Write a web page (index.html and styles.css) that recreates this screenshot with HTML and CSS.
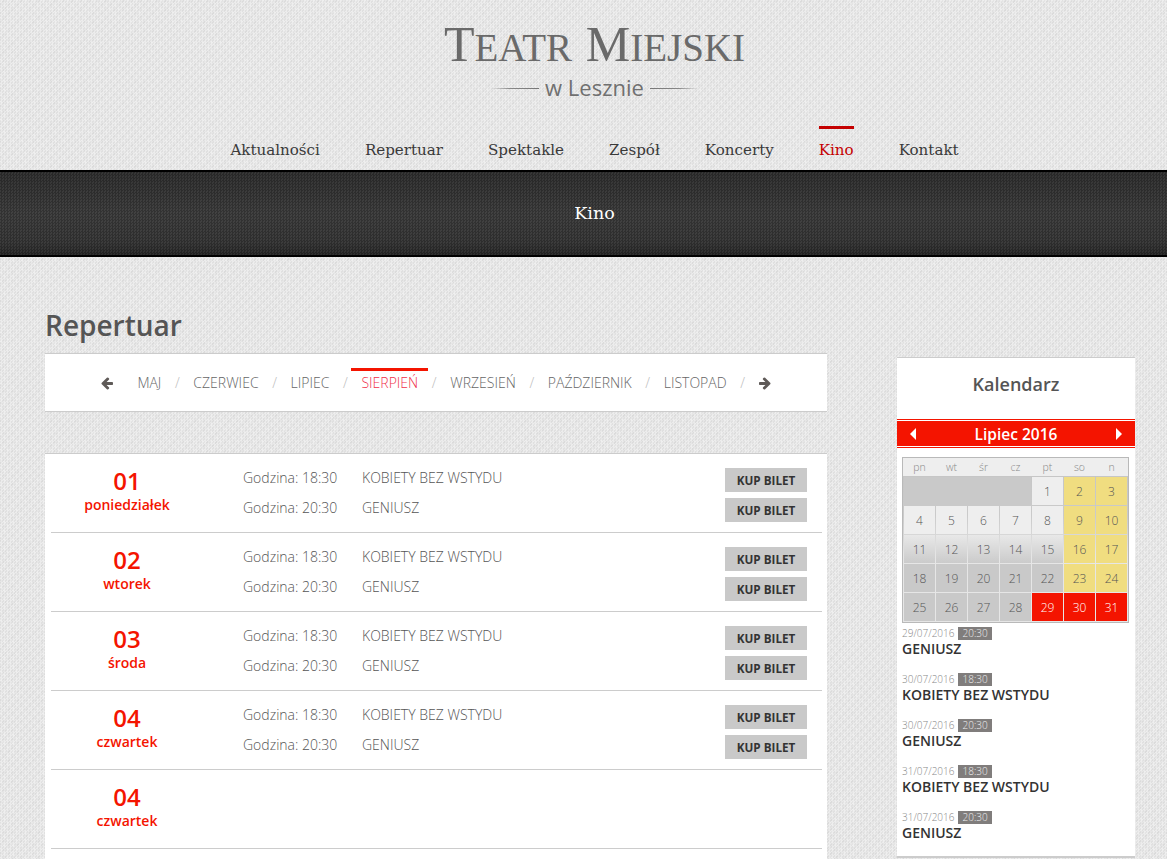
FILE: index.html
```html
<!DOCTYPE html>
<html lang="pl">
<head>
<meta charset="utf-8">
<title>Teatr Miejski w Lesznie</title>
<link rel="stylesheet" href="styles.css">
</head>
<body>
<header class="site-header">
  <div class="logo">
    <div class="logo-title"><span class="cap">T</span>EATR <span class="cap">M</span>IEJSKI</div>
    <div class="logo-sub">w Lesznie</div>
  </div>
  <nav class="main-nav">
    <a href="#">Aktualności</a>
    <a href="#">Repertuar</a>
    <a href="#">Spektakle</a>
    <a href="#">Zespół</a>
    <a href="#">Koncerty</a>
    <a href="#" class="active">Kino</a>
    <a href="#">Kontakt</a>
  </nav>
</header>
<div class="band">Kino</div>
<main class="content">
  <section class="left">
    <h1 class="page-title">Repertuar</h1>
    <div class="months card">
      <svg class="arrow" viewBox="0 0 1792 1792"><path d="M1664 896v128q0 53-32.500 90.500t-84.500 37.500h-704l293 294q38 36 38 90t-38 90l-75 76q-37 37-90 37-52 0-91-37l-651-652q-37-37-37-90 0-52 37-91l651-650q38-38 91-38 52 0 90 38l75 74q38 38 38 91t-38 91l-293 293h704q52 0 84.500 37.500t32.500 90.500z"/></svg>
      <a href="#" class="month first">MAJ</a><span class="sep">/</span>
      <a href="#" class="month">CZERWIEC</a><span class="sep">/</span>
      <a href="#" class="month">LIPIEC</a><span class="sep">/</span>
      <a href="#" class="month current">SIERPIEŃ</a><span class="sep">/</span>
      <a href="#" class="month">WRZESIEŃ</a><span class="sep">/</span>
      <a href="#" class="month">PAŹDZIERNIK</a><span class="sep">/</span>
      <a href="#" class="month">LISTOPAD</a><span class="sep">/</span>
      <svg class="arrow arrow-right" viewBox="0 0 1792 1792"><path d="M1664 896v128q0 53-32.500 90.500t-84.500 37.500h-704l293 294q38 36 38 90t-38 90l-75 76q-37 37-90 37-52 0-91-37l-651-652q-37-37-37-90 0-52 37-91l651-650q38-38 91-38 52 0 90 38l75 74q38 38 38 91t-38 91l-293 293h704q52 0 84.500 37.500t32.500 90.500z"/></svg>
    </div>
    <div class="days card">
      <div class="day">
        <div class="date"><div class="num">01</div><div class="name">poniedziałek</div></div>
        <div class="shows">
          <div class="show"><span class="hour">Godzina: 18:30</span><span class="film">KOBIETY BEZ WSTYDU</span><a href="#" class="buy">KUP BILET</a></div>
          <div class="show"><span class="hour">Godzina: 20:30</span><span class="film">GENIUSZ</span><a href="#" class="buy">KUP BILET</a></div>
        </div>
      </div>
      <div class="day">
        <div class="date"><div class="num">02</div><div class="name">wtorek</div></div>
        <div class="shows">
          <div class="show"><span class="hour">Godzina: 18:30</span><span class="film">KOBIETY BEZ WSTYDU</span><a href="#" class="buy">KUP BILET</a></div>
          <div class="show"><span class="hour">Godzina: 20:30</span><span class="film">GENIUSZ</span><a href="#" class="buy">KUP BILET</a></div>
        </div>
      </div>
      <div class="day">
        <div class="date"><div class="num">03</div><div class="name">środa</div></div>
        <div class="shows">
          <div class="show"><span class="hour">Godzina: 18:30</span><span class="film">KOBIETY BEZ WSTYDU</span><a href="#" class="buy">KUP BILET</a></div>
          <div class="show"><span class="hour">Godzina: 20:30</span><span class="film">GENIUSZ</span><a href="#" class="buy">KUP BILET</a></div>
        </div>
      </div>
      <div class="day">
        <div class="date"><div class="num">04</div><div class="name">czwartek</div></div>
        <div class="shows">
          <div class="show"><span class="hour">Godzina: 18:30</span><span class="film">KOBIETY BEZ WSTYDU</span><a href="#" class="buy">KUP BILET</a></div>
          <div class="show"><span class="hour">Godzina: 20:30</span><span class="film">GENIUSZ</span><a href="#" class="buy">KUP BILET</a></div>
        </div>
      </div>
      <div class="day">
        <div class="date"><div class="num">04</div><div class="name">czwartek</div></div>
        <div class="shows"></div>
      </div>
    </div>
  </section>
  <aside class="sidebar card">
    <h2 class="side-title">Kalendarz</h2>
    <div class="cal-head">
      <span class="tri tri-left"></span>
      <span class="cal-month">Lipiec 2016</span>
      <span class="tri tri-right"></span>
    </div>
    <div class="cal">
      <span class="wd">pn</span><span class="wd">wt</span><span class="wd">śr</span><span class="wd">cz</span><span class="wd">pt</span><span class="wd">so</span><span class="wd">n</span>
      <span class="blank"></span><span class="c light">1</span><span class="c yel">2</span><span class="c yel">3</span>
      <span class="c light">4</span><span class="c light">5</span><span class="c light">6</span><span class="c light">7</span><span class="c light">8</span><span class="c yel">9</span><span class="c yel">10</span>
      <span class="c mid">11</span><span class="c mid">12</span><span class="c mid">13</span><span class="c mid">14</span><span class="c mid">15</span><span class="c yel">16</span><span class="c yel">17</span>
      <span class="c grey">18</span><span class="c grey">19</span><span class="c grey">20</span><span class="c grey">21</span><span class="c grey">22</span><span class="c yel">23</span><span class="c yel">24</span>
      <span class="c grey">25</span><span class="c grey">26</span><span class="c grey">27</span><span class="c grey">28</span><span class="c red">29</span><span class="c red">30</span><span class="c red">31</span>
    </div>
    <ul class="events">
      <li><div class="when">29/07/2016 <span class="time">20:30</span></div><div class="what">GENIUSZ</div></li>
      <li><div class="when">30/07/2016 <span class="time">18:30</span></div><div class="what">KOBIETY BEZ WSTYDU</div></li>
      <li><div class="when">30/07/2016 <span class="time">20:30</span></div><div class="what">GENIUSZ</div></li>
      <li><div class="when">31/07/2016 <span class="time">18:30</span></div><div class="what">KOBIETY BEZ WSTYDU</div></li>
      <li><div class="when">31/07/2016 <span class="time">20:30</span></div><div class="what">GENIUSZ</div></li>
    </ul>
  </aside>
</main>
</body>
</html>
```
FILE: styles.css
```css
* { box-sizing: border-box; }
html, body { height: 100%; overflow: hidden; }
body {
  margin: 0;
  font-family: "Open Sans", sans-serif;
  color: #444;
  background-color: #e6e6e6;
  background-image:
    repeating-linear-gradient(45deg, rgba(255,255,255,.14) 0 2px, transparent 2px 6px),
    repeating-linear-gradient(-45deg, rgba(0,0,0,.025) 0 2px, transparent 2px 6px),
    repeating-conic-gradient(#ececec 0 25%, #e0e0e0 0 50%);
  background-size: auto, auto, 3px 3px;
}
a { color: inherit; text-decoration: none; }

.site-header { height: 170px; padding: 16px 0 0 22px; display: flex; flex-direction: column; align-items: center; }
.logo { display: flex; flex-direction: column; align-items: center; color: #6a6a6a; }
.logo-title { font-family: "Liberation Serif", serif; font-size: 39px; line-height: 56px; white-space: pre; word-spacing: 4px; }
.logo-title .cap { font-size: 50px; }
.logo-sub { display: flex; align-items: center; gap: 6px; font-size: 22px; line-height: 28px; margin-top: -3px; color: #707070; }
.logo-sub::before, .logo-sub::after { content: ""; width: 48px; height: 1px; margin-top: 2px; }
.logo-sub::before { background: linear-gradient(to right, transparent, #888 40%, #777); }
.logo-sub::after { background: linear-gradient(to left, transparent, #888 40%, #777); }

.main-nav { display: flex; gap: 45px; margin-top: 25px; font-family: "DejaVu Serif", serif; font-size: 15.100px; color: #3a3a3a; }
.main-nav a { display: block; padding-top: 9px; line-height: 24px; border-top: 3px solid transparent; }
.main-nav a.active { color: #c40000; border-top-color: #c40000; }

.band {
  height: 87px;
  border-top: 2px solid #000;
  border-bottom: 2px solid #000;
  padding: 0 0 2px 22px;
  display: flex; align-items: center; justify-content: center;
  font-family: "DejaVu Serif", serif; font-size: 17.500px; color: #fff;
  background-color: #333;
  background-image:
    repeating-conic-gradient(rgba(0,0,0,.16) 0 25%, rgba(255,255,255,.03) 0 50%),
    linear-gradient(to bottom, #2f2f2f, #3c3c3c 50%, #363636 85%, #272727);
  background-size: 3px 3px, auto;
}

.content { display: grid; grid-template-columns: 782px 238px; column-gap: 70px; padding: 0 0 0 45px; align-items: start; }
.card { background: #fff; border-top: 1px solid #ccc; border-bottom: 1px solid #ccc; }

.page-title { margin: 0; padding-top: 48px; height: 96px; font-size: 28px; line-height: 40px; font-weight: 600; color: #555; }

.months { height: 59px; display: flex; align-items: center; justify-content: center; font-size: 14px; font-weight: 300; color: #666; }
.month { position: relative; padding: 0 10px; line-height: 20px; }
.month.first { margin-left: 13px; }
.month.current { color: #f0304a; }
.month.current::before { content: ""; position: absolute; left: 0; right: 0; top: -5px; height: 3px; background: #f41400; }
.sep { width: 12px; text-align: center; color: #bbb; }
.arrow { width: 14px; height: 14px; fill: #5f5a58; flex: none; }
.arrow-right { margin-left: 9px; transform: scaleX(-1); }

.days { margin-top: 41px; padding: 0 5px 0 6px; min-height: 420px; }
.day { height: 79px; display: flex; border-bottom: 1px solid #ccc; padding-top: 9px; }
.date { width: 152px; flex: none; text-align: center; color: #f41400; font-weight: 600; }
.num { font-size: 24px; line-height: 36px; }
.name { font-size: 14px; line-height: 14px; margin-top: -1px; }
.shows { flex: 1; padding: 0 15px 0 40px; }
.show { height: 30px; display: flex; align-items: flex-start; font-size: 14px; font-weight: 300; line-height: 30px; color: #555; }
.hour { width: 119px; flex: none; }
.film { flex: 1; }
.buy { width: 82px; height: 24px; margin-top: 5px; background: #c9c9c9; color: #333; font-size: 11.700px; font-weight: 700; line-height: 24px; text-align: center; }

.sidebar { margin-top: 100px; height: 501px; border-bottom-width: 2px; }
.side-title { margin: 0; height: 61px; font-size: 18px; line-height: 52px; font-weight: 600; text-align: center; color: #555; }
.cal-head {
  height: 29px;
  display: flex; align-items: center; justify-content: space-between;
  padding: 0 13px;
  background: #f41400;
  box-shadow: inset 0 1px 0 #f41400, inset 0 2px 0 #fff, inset 0 -1px 0 #f41400, inset 0 -2px 0 #fff;
  color: #fff;
}
.cal-month { font-size: 15.500px; font-weight: 600; }
.tri { width: 0; height: 0; border-top: 6px solid transparent; border-bottom: 6px solid transparent; }
.tri-left { border-right: 6px solid #fff; }
.tri-right { border-left: 6px solid #fff; }

.cal {
  width: 227px; margin: 9px 0 0 5px;
  display: grid; grid-template-columns: repeat(7, 31px); grid-template-rows: 18px repeat(5, 28px); gap: 1px;
  padding: 0 1px 1px;
  border: 1px solid #b9b9b9;
  background: linear-gradient(#c4c4c4, #cacaca 35%, #e6e6e6 60%);
  font-size: 12px; font-weight: 300;
}
.cal span { display: flex; align-items: center; justify-content: center; }
.wd { background: #eee; color: #888; font-size: 10.500px; margin: 0 -1px; }
.blank { grid-column: span 4; background: #c9c9c9; }
.c { color: #555; }
.light { background: #eee; }
.mid { background: linear-gradient(#e8e8e8, #cbcbcb); }
.grey { background: #c9c9c9; }
.yel { background: #f0dd80; }
.red { background: #f41400; color: #fff; }

.events { list-style: none; margin: 3px 0 0 5px; padding: 0; }
.events li { height: 46px; }
.when { font-size: 10px; font-weight: 300; line-height: 14px; color: #888; }
.time { display: inline-block; margin-left: 1px; width: 34px; height: 13px; line-height: 13px; text-align: center; background: #807d7c; color: #eee; }
.what { font-size: 14px; font-weight: 600; line-height: 18px; color: #333; }
```
